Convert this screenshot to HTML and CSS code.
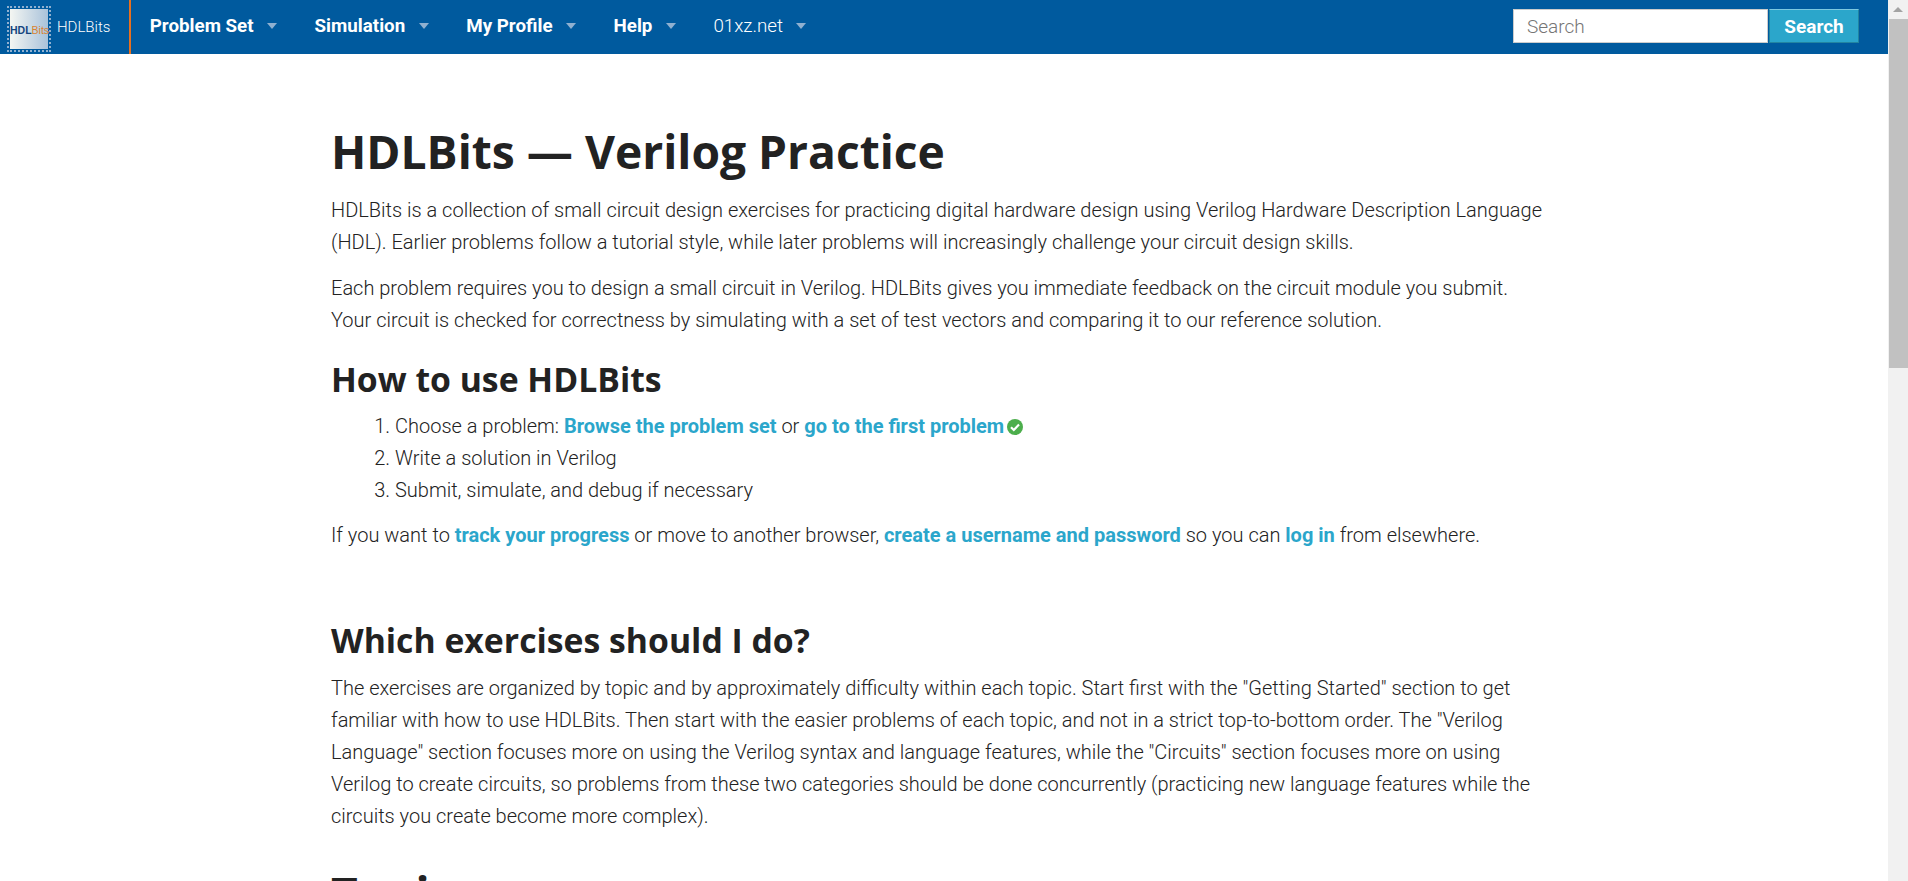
FILE: index.html
```html
<!DOCTYPE html>
<html>
<head>
    <title>HDLBits</title>
    <link rel="stylesheet" href="styles.css">
</head>
<body>
    <div class="top-bar">
        <div class="logo-area">
            <div class="logo-box"><span class="logo-hdl">HDL</span><span class="logo-bits">Bits</span></div>
            <span class="logo-name">HDLBits</span>
        </div>
        <a class="menu-item bold">Problem Set<span class="arrow"></span></a>
        <a class="menu-item bold">Simulation<span class="arrow"></span></a>
        <a class="menu-item bold">My Profile<span class="arrow"></span></a>
        <a class="menu-item bold">Help<span class="arrow"></span></a>
        <a class="menu-item">01xz.net<span class="arrow"></span></a>
        <div class="search-area">
            <input class="search-input" type="text" placeholder="Search">
            <button class="search-button">Search</button>
        </div>
    </div>
    <div class="scrollbar">
        <div class="scrollbar-arrow"></div>
        <div class="scrollbar-thumb"></div>
    </div>
    <div class="content">
        <h1>HDLBits — Verilog Practice</h1>
        <p>HDLBits is a collection of small circuit design exercises for practicing digital hardware design using Verilog Hardware Description Language (HDL). Earlier problems follow a tutorial style, while later problems will increasingly challenge your circuit design skills.</p>
        <p>Each problem requires you to design a small circuit in Verilog. HDLBits gives you immediate feedback on the circuit module you submit. Your circuit is checked for correctness by simulating with a set of test vectors and comparing it to our reference solution.</p>
        <h2>How to use HDLBits</h2>
        <ol>
            <li>Choose a problem: <a>Browse the problem set</a> or <a>go to the first problem</a><svg class="check" viewBox="0 0 16 16"><circle cx="8" cy="8" r="8" fill="#4cae4c"/><path d="M4 8.2l2.8 2.8L12 5.6" fill="none" stroke="#fff" stroke-width="2.2"/></svg></li>
            <li>Write a solution in Verilog</li>
            <li>Submit, simulate, and debug if necessary</li>
        </ol>
        <p>If you want to <a>track your progress</a> or move to another browser, <a>create a username and password</a> so you can <a>log in</a> from elsewhere.</p>
        <h2 class="spaced">Which exercises should I do?</h2>
        <p>The exercises are organized by topic and by approximately difficulty within each topic. Start first with the "Getting Started" section to get familiar with how to use HDLBits. Then start with the easier problems of each topic, and not in a strict top-to-bottom order. The "Verilog Language" section focuses more on using the Verilog syntax and language features, while the "Circuits" section focuses more on using Verilog to create circuits, so problems from these two categories should be done concurrently (practicing new language features while the circuits you create become more complex).</p>
        <h1 class="topics">Topics</h1>
    </div>
</body>
</html>
```
FILE: styles.css
```css
html, body {
    height: 100%;
    overflow: hidden;
}
body {
    margin: 0;
    font-family: Roboto, sans-serif;
    font-weight: 300;
    font-size: 20px;
    color: #222;
    background-color: white;
}
.top-bar {
    display: flex;
    align-items: center;
    height: 54px;
    width: 1888px;
    background-color: #005a9e;
    color: white;
}
.logo-area {
    display: flex;
    align-items: center;
    height: 100%;
    width: 131px;
    box-sizing: border-box;
    padding-left: 7px;
    border-right: 2px solid #e8701f;
}
.logo-box {
    width: 44px;
    height: 46px;
    margin-top: 3px;
    box-sizing: border-box;
    border: 2px dotted #8fb0d0;
    padding: 1px;
    background: linear-gradient(90deg, #f4f6f2, #a9c2da) content-box;
    font-family: "Liberation Sans", sans-serif;
    font-size: 10.5px;
    font-weight: 700;
    line-height: 42px;
    text-align: center;
    white-space: nowrap;
}
.logo-hdl {
    color: #14457f;
}
.logo-bits {
    color: #d9822f;
    font-weight: 400;
}
.logo-name {
    margin-left: 6px;
    font-size: 15px;
    font-weight: 300;
}
.menu-item {
    display: flex;
    align-items: center;
    padding: 0 18.75px 2px;
    font-size: 18.75px;
    font-weight: 300;
}
.menu-item.bold {
    font-weight: 700;
}
.arrow {
    margin-left: 13.5px;
    border: 5.5px solid transparent;
    border-top: 6px solid #8fb0d0;
    border-bottom-width: 0;
}
.search-area {
    display: flex;
    gap: 1px;
    margin-left: auto;
    margin-right: 29px;
    margin-bottom: 2px;
}
.search-input {
    width: 255px;
    height: 34px;
    box-sizing: border-box;
    border: 1px solid #ccc;
    padding: 0 13px;
    font-family: Roboto, sans-serif;
    font-weight: 300;
    font-size: 19px;
}
.search-button {
    width: 90px;
    height: 34px;
    box-sizing: border-box;
    border: 1px solid #2284a1;
    border-top-color: #7cc8e0;
    background-color: #2ba6cb;
    color: white;
    font-family: Roboto, sans-serif;
    font-weight: 700;
    font-size: 19px;
    padding: 0;
}
.scrollbar {
    position: absolute;
    top: 0;
    right: 0;
    width: 20px;
    height: 100%;
    background-color: #f1f1f1;
}
.scrollbar-arrow {
    width: 0;
    margin: 7px 0 0 5px;
    border: 5px solid transparent;
    border-bottom-color: #a3a3a3;
    border-top-width: 0;
}
.scrollbar-thumb {
    margin: 7px 0 0 1px;
    height: 349px;
    background-color: #c1c1c1;
}
.content {
    width: 1212px;
    margin-left: 331px;
    line-height: 32px;
}
h1, h2 {
    font-family: "Open Sans", sans-serif;
    font-weight: 700;
    color: #222;
    margin: 0;
}
h1 {
    font-size: 46.2px;
    line-height: 64px;
    padding-top: 66px;
    margin-bottom: 10px;
}
h2 {
    font-size: 33.75px;
    line-height: 46px;
    margin-top: 20px;
    margin-bottom: 8px;
}
h2.spaced {
    margin-top: 66px;
    margin-bottom: 9px;
}
h1.topics {
    padding-top: 16px;
}
p {
    margin: 0 0 14px 0;
}
ol {
    margin: 0 0 13px 0;
    padding-left: 64px;
}
a {
    color: #2ba6cb;
    font-weight: 700;
}
.top-bar a {
    color: white;
}
.check {
    width: 16px;
    height: 16px;
    margin-left: 3px;
    vertical-align: -2px;
}
```
